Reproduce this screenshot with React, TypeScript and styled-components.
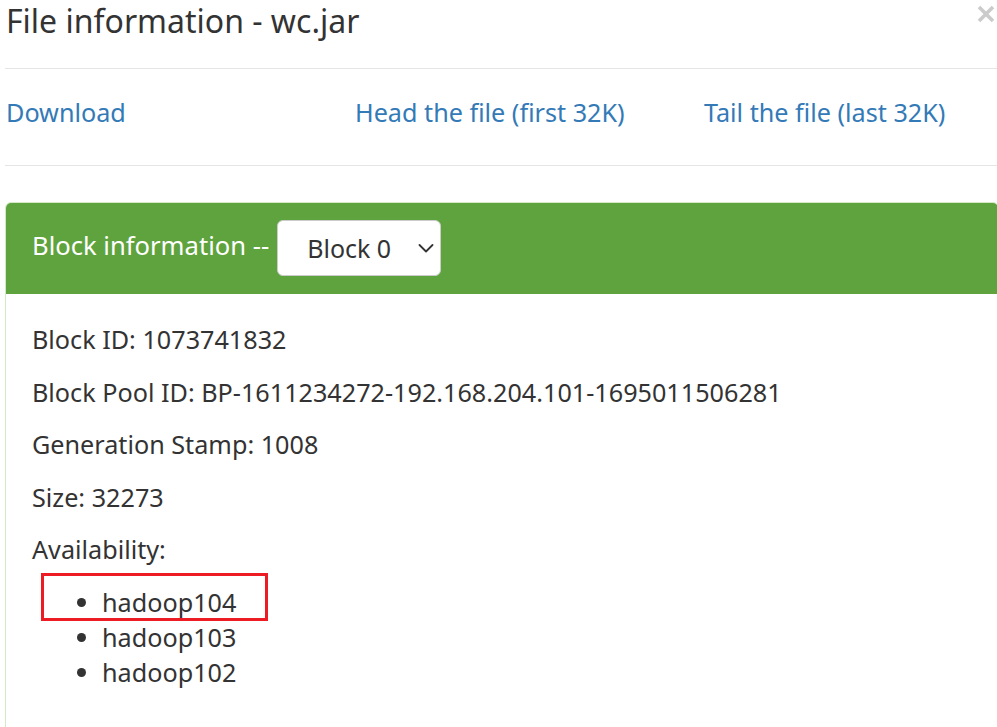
import React from "react";
import styled, { createGlobalStyle } from "styled-components";

const Global = createGlobalStyle`
  html, body { margin: 0; padding: 0; background: #fff; }
  body {
    font-family: "Noto Sans", "Open Sans", sans-serif;
    color: #333;
    font-size: 25.2px;
    line-height: 35px;
  }
`;

const Page = styled.div`
  width: 997px;
  height: 727px;
  overflow: hidden;
  background: #fff;
`;

const Header = styled.div`
  height: 68px;
  border-bottom: 1px solid #e5e5e5;
  margin-left: 5px;
  display: flex;
  justify-content: space-between;
  align-items: flex-start;
`;

const Title = styled.h4`
  margin: 0;
  padding-left: 1px;
  font-size: 32px;
  font-weight: 400;
  line-height: 41px;
  color: #333;
`;

const Close = styled.button`
  border: 0;
  background: transparent;
  padding: 0;
  margin: 4px 1px 0 0;
  width: 20px;
  height: 20px;
  display: flex;
  align-items: center;
  justify-content: center;
  opacity: 0.2;
  cursor: pointer;
`;

const LinkRow = styled.div`
  margin-left: 5px;
  padding: 26px 0 35px 1px;
  border-bottom: 1px solid #e5e5e5;
  display: grid;
  grid-template-columns: 349px 349px 1fr;
`;

const Link = styled.a`
  color: #337ab7;
  text-decoration: none;
  line-height: 35px;
  white-space: nowrap;
`;

const Panel = styled.div`
  margin: 36px 0 0 5px;
  width: 992px;
  border: 1px solid #d6e9c6;
  border-radius: 6px;
  overflow: hidden;
`;

const PanelHeading = styled.div`
  background: #5fa33e;
  color: #fff;
  padding: 17px 26px 18px 26px;
  display: flex;
  align-items: center;
  gap: 8px;
`;

const PanelTitle = styled.span`
  font-size: 25.6px;
  line-height: 40px;
  padding-bottom: 5px;
`;

const SelectWrap = styled.div`
  position: relative;
  width: 164px;
  height: 56px;
`;

const Select = styled.select`
  appearance: none;
  -webkit-appearance: none;
  width: 100%;
  height: 100%;
  box-sizing: border-box;
  border: 1px solid #ccc;
  border-radius: 6px;
  background: #fff;
  color: #333;
  font-family: "Noto Sans", "Open Sans", sans-serif;
  font-size: 25px;
  padding: 0 0 0 29px;
  outline: none;
`;

const Chevron = styled.svg`
  position: absolute;
  right: 7px;
  top: 24px;
  pointer-events: none;
`;

const PanelBody = styled.div`
  padding: 28px 26px 60px 26px;
`;

const Para = styled.p`
  margin: 0 0 17.5px 0;
  line-height: 35px;
`;

const List = styled.ul`
  position: relative;
  margin: 0;
  padding-left: 70px;
  line-height: 35px;
`;

const Highlight = styled.div`
  position: absolute;
  left: 9px;
  top: -12px;
  width: 227px;
  height: 48px;
  box-sizing: border-box;
  border: 3px solid #ed1c24;
  pointer-events: none;
`;

const Item = styled.li`
  line-height: 35px;
`;

const blockInfo = [
  "Block ID: 1073741832",
  "Block Pool ID: BP-1611234272-192.168.204.101-1695011506281",
  "Generation Stamp: 1008",
  "Size: 32273",
  "Availability:",
];

const hosts = ["hadoop104", "hadoop103", "hadoop102"];

export default function App() {
  return (
    <Page>
      <Global />
      <Header>
        <Title>File information - wc.jar</Title>
        <Close aria-label="Close">
          <svg width="20" height="20" viewBox="0 0 20 20">
            <path
              d="M3 3 L17 17 M17 3 L3 17"
              stroke="#000"
              strokeWidth="3.6"
              strokeLinecap="butt"
              fill="none"
            />
          </svg>
        </Close>
      </Header>
      <LinkRow>
        <Link href="#">Download</Link>
        <Link href="#">Head the file (first 32K)</Link>
        <Link href="#">Tail the file (last 32K)</Link>
      </LinkRow>
      <Panel>
        <PanelHeading>
          <PanelTitle>Block information --</PanelTitle>
          <SelectWrap>
            <Select defaultValue="0">
              <option value="0">Block 0</option>
            </Select>
            <Chevron width="16" height="9" viewBox="0 0 16 9">
              <polyline
                points="1.5,1 8,7.5 14.5,1"
                fill="none"
                stroke="#333"
                strokeWidth="1.8"
                strokeLinecap="round"
                strokeLinejoin="round"
              />
            </Chevron>
          </SelectWrap>
        </PanelHeading>
        <PanelBody>
          {blockInfo.map((t) => (
            <Para key={t}>{t}</Para>
          ))}
          <List>
            <Highlight />
            {hosts.map((h) => (
              <Item key={h}>{h}</Item>
            ))}
          </List>
        </PanelBody>
      </Panel>
    </Page>
  );
}
